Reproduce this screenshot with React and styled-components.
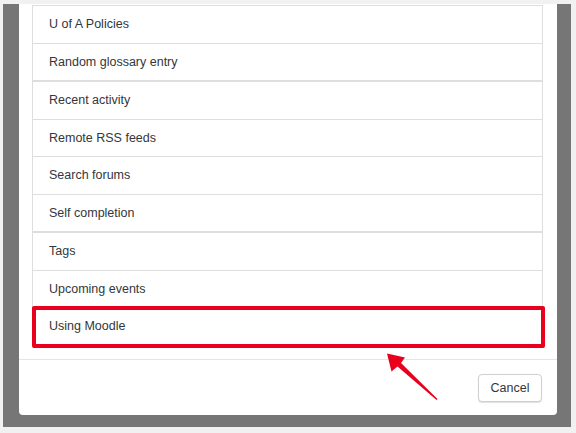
import React from "react";
import styled, { createGlobalStyle } from "styled-components";

const GlobalStyle = createGlobalStyle`
  html, body {
    margin: 0;
    padding: 0;
    background: #f1f1f1;
    overflow: hidden;
  }
  body {
    font-family: "Liberation Sans", Arial, sans-serif;
    color: #373a3c;
  }
`;

const Frame = styled.div`
  width: 576px;
  height: 433px;
  box-sizing: border-box;
  padding: 4px 5px 6px 3px;
`;

const Backdrop = styled.div`
  height: 100%;
  box-sizing: border-box;
  background: #767676;
  padding: 0 14px 12px 16px;
  overflow: hidden;
`;

const Modal = styled.div`
  position: relative;
  height: 100%;
  display: flex;
  flex-direction: column;
  background: #fff;
  border-radius: 0 0 4px 4px;
`;

const Body = styled.div`
  flex: 1;
  padding: 1px 14px 0 13px;
`;

const Group = styled.div`
  border: 1px solid #dedede;
`;

const Item = styled.div`
  position: relative;
  height: 36.5px;
  display: flex;
  align-items: center;
  padding: 0 16px;
  font-size: 12.5px;
  color: #33363a;

  & + & {
    border-top: 1px solid #dedede;
  }
`;

const Highlight = styled.div`
  position: absolute;
  top: -2px;
  left: -1px;
  right: -3px;
  bottom: -3.5px;
  border: 4px solid #e8001c;
  border-radius: 2px;
  pointer-events: none;
`;

const Footer = styled.div`
  height: 55px;
  border-top: 1px solid #e5e5e5;
  display: flex;
  align-items: center;
  justify-content: flex-end;
  padding: 0 15px;
`;

const Button = styled.button`
  height: 28px;
  width: 64px;
  padding: 0;
  font-family: "Liberation Sans", Arial, sans-serif;
  font-size: 12.5px;
  color: #33363a;
  background: #fff;
  border: 1px solid #cfcfcf;
  border-radius: 4px;
  box-shadow: 0 1px 1px rgba(0, 0, 0, 0.12);
`;

const Arrow = styled.svg`
  position: absolute;
  left: 361px;
  top: 341px;
  pointer-events: none;
`;

const groups = [
  ["U of A Policies", "Random glossary entry"],
  ["Recent activity", "Remote RSS feeds", "Search forums", "Self completion"],
  ["Tags", "Upcoming events", "Using Moodle"],
];

export default function App() {
  return (
    <>
      <GlobalStyle />
      <Frame>
        <Backdrop>
          <Modal>
            <Body>
              {groups.map((g, gi) => (
                <Group key={gi}>
                  {g.map((label) => (
                    <Item key={label}>
                      {label}
                      {label === "Using Moodle" && <Highlight />}
                    </Item>
                  ))}
                </Group>
              ))}
            </Body>
            <Footer>
              <Button>Cancel</Button>
            </Footer>
            <Arrow width="62" height="60" viewBox="0 0 62 60">
              <polygon
                fill="#e8001c"
                points="7,8.5 25,12.5 21,18 57.5,54 56.5,55 17.5,21.5 11.5,26.5"
              />
            </Arrow>
          </Modal>
        </Backdrop>
      </Frame>
    </>
  );
}
